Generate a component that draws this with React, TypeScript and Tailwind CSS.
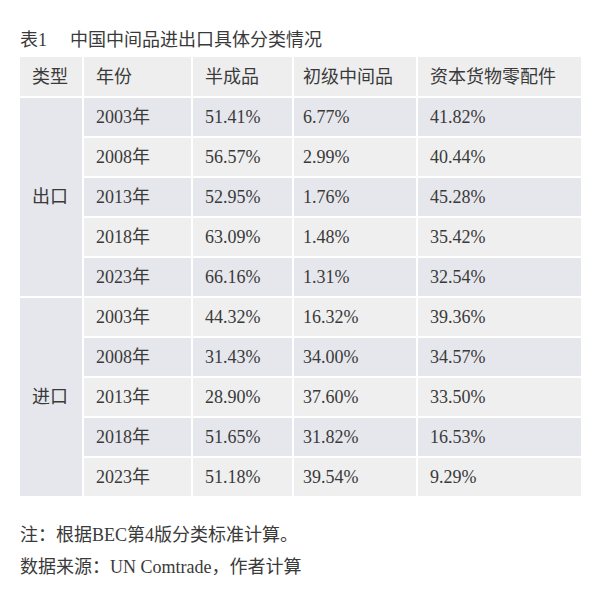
const rows = [
  { type: "出口", year: "2003年", semi: "51.41%", primary: "6.77%", parts: "41.82%" },
  { type: "出口", year: "2008年", semi: "56.57%", primary: "2.99%", parts: "40.44%" },
  { type: "出口", year: "2013年", semi: "52.95%", primary: "1.76%", parts: "45.28%" },
  { type: "出口", year: "2018年", semi: "63.09%", primary: "1.48%", parts: "35.42%" },
  { type: "出口", year: "2023年", semi: "66.16%", primary: "1.31%", parts: "32.54%" },
  { type: "进口", year: "2003年", semi: "44.32%", primary: "16.32%", parts: "39.36%" },
  { type: "进口", year: "2008年", semi: "31.43%", primary: "34.00%", parts: "34.57%" },
  { type: "进口", year: "2013年", semi: "28.90%", primary: "37.60%", parts: "33.50%" },
  { type: "进口", year: "2018年", semi: "51.65%", primary: "31.82%", parts: "16.53%" },
  { type: "进口", year: "2023年", semi: "51.18%", primary: "39.54%", parts: "9.29%" },
];

const font = { fontFamily: '"Liberation Serif", "Noto Sans CJK SC", serif' };

export default function App() {
  return (
    <div className="w-[604px] h-[601px] bg-white text-[#3a3a3a] text-[18px]" style={font}>
      <div className="pt-[27px] pl-[20px] h-[55px] leading-[26px]">
        表1<span className="inline-block w-[23px]" />中国中间品进出口具体分类情况
      </div>

      <table className="ml-[18px] border-separate border-spacing-[2px] leading-[38px]">
        <thead>
          <tr className="bg-[#eeeeee]">
            <th className="w-[62px] h-[39px] pl-[12px] text-left font-normal">类型</th>
            <th className="w-[107px] pl-[12px] text-left font-normal">年份</th>
            <th className="w-[99px] pl-[12px] text-left font-normal">半成品</th>
            <th className="w-[122px] pl-[9px] text-left font-normal">初级中间品</th>
            <th className="w-[163px] pl-[12px] text-left font-normal">资本货物零配件</th>
          </tr>
        </thead>
        <tbody>
          {rows.map((r, i) => (
            <tr key={i} className={i % 2 === 0 ? "bg-[#e6e7ec]" : "bg-[#efefef]"}>
              {i % 5 === 0 && (
                <td rowSpan={5} className="bg-[#e6e7ec] pl-[12px] align-middle">
                  {r.type}
                </td>
              )}
              <td className="h-[38px] pl-[12px]">{r.year}</td>
              <td className="pl-[12px]">{r.semi}</td>
              <td className="pl-[9px]">{r.primary}</td>
              <td className="pl-[12px]">{r.parts}</td>
            </tr>
          ))}
        </tbody>
      </table>

      <div className="pl-[20px] pt-[21px] leading-[32px]">
        <p>注：根据BEC第4版分类标准计算。</p>
        <p>数据来源：UN Comtrade，作者计算</p>
      </div>
    </div>
  );
}
